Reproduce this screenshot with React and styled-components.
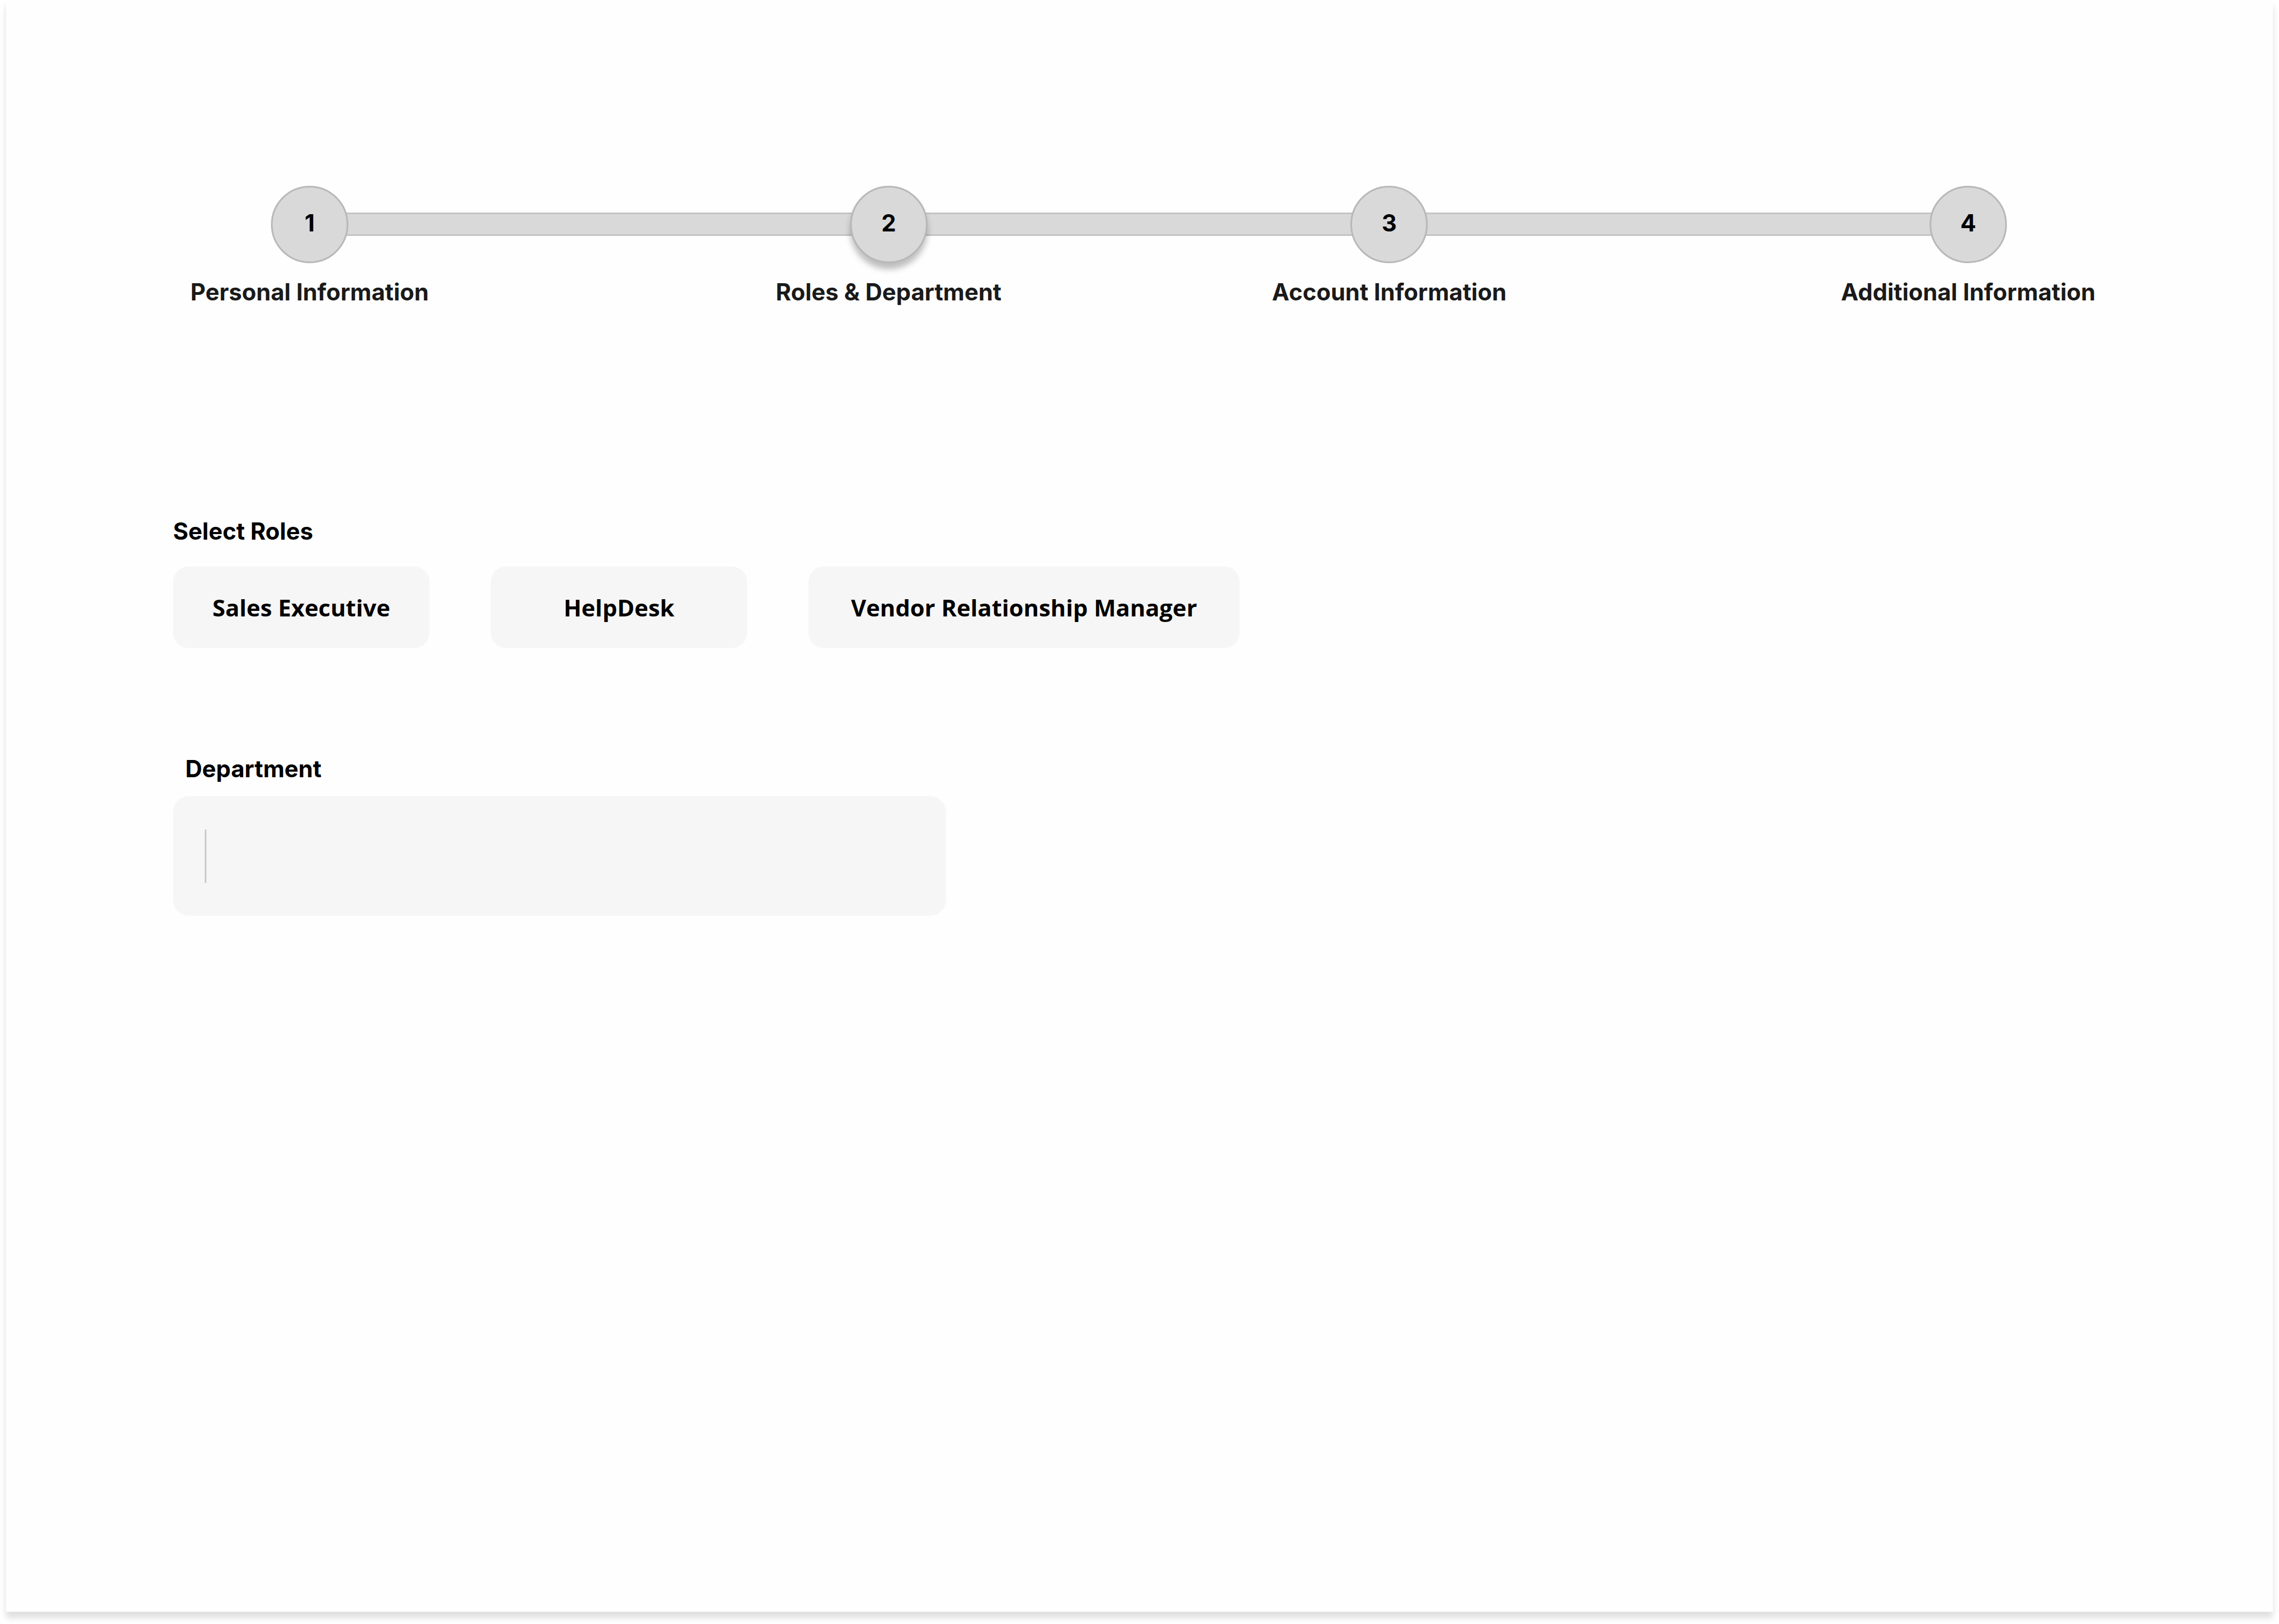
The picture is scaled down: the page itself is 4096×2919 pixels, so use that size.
import React, { useState } from "react";
import styled, { createGlobalStyle } from "styled-components";

const GlobalStyle = createGlobalStyle`
  *, *::before, *::after { box-sizing: border-box; }
  body {
    margin: 0;
    background: #ffffff;
    font-family: Inter, "Liberation Sans", sans-serif;
    font-size: 42px;
    line-height: 52px;
    color: #000000;
  }
`;

const Page = styled.div`
  padding: 0 11px 22px;
`;

const Card = styled.main`
  min-height: calc(100vh - 22px);
  padding: 334px 300px 100px;
  background: #fefefe;
  box-shadow: 0 11px 11px rgba(0, 0, 0, 0.13);
`;

const Stepper = styled.ol`
  display: flex;
  align-items: flex-start;
  margin: 0;
  padding: 0 178px 0 176px;
  list-style: none;
`;

const Step = styled.li`
  flex: none;
  z-index: 1;
  display: flex;
  flex-direction: column;
  align-items: center;
  gap: 26px;
  width: 139px;
`;

const StepCircle = styled.button`
  display: flex;
  align-items: center;
  justify-content: center;
  width: 139px;
  height: 139px;
  padding: 0 0 6px;
  border: 3px solid #b8b8b8;
  border-radius: 50%;
  background: #d9d9d9;
  color: #000000;
  font: inherit;
  font-weight: 700;
  box-shadow: ${(p) => (p.$current ? "0 11px 11px rgba(0, 0, 0, 0.25)" : "none")};
`;

const StepLabel = styled.span`
  font-weight: 700;
  color: #1a1a1a;
  white-space: nowrap;
`;

const Connector = styled.li`
  flex: ${(p) => p.$grow} 1 0;
  height: 42px;
  margin: 48px -12px 0;
  border: 3px solid #c4c4c4;
  border-width: 3px 0;
  background: #d9d9d9;
`;

const Form = styled.form`
  display: flex;
  flex-direction: column;
  gap: 191px;
  margin-top: 378px;
`;

const RoleGroup = styled.section`
  display: flex;
  flex-direction: column;
  gap: 37px;
`;

const SectionTitle = styled.h2`
  margin: 0;
  font-size: 42px;
  font-weight: 700;
`;

const RoleList = styled.div`
  display: flex;
  flex-wrap: wrap;
  gap: 110px;
`;

const RoleButton = styled.button`
  min-width: ${(p) => (p.$wide ? 775 : 461)}px;
  height: 147px;
  padding: 0 56px;
  border: 0;
  border-radius: 28px;
  background: #f6f6f6;
  color: #000000;
  font: 700 42px "Open Sans", "Noto Sans", sans-serif;
`;

const Field = styled.div`
  display: flex;
  flex-direction: column;
  gap: 23px;
  max-width: 1389px;
`;

const FieldLabel = styled.label`
  padding-left: 22px;
  font-weight: 700;
`;

const FieldBox = styled.div`
  display: flex;
  align-items: center;
  height: 215px;
  padding: 0 57px;
  border-radius: 28px;
  background: #f6f6f6;
`;

const TextInput = styled.input`
  flex: 1;
  height: 96px;
  padding: 0 16px;
  border: 0;
  border-left: 3px solid #cbcbcb;
  outline: none;
  background: transparent;
  color: #000000;
  font: inherit;
`;

const steps = [
  { label: "Personal Information", grow: 926 },
  { label: "Roles & Department", grow: 785 },
  { label: "Account Information", grow: 926 },
  { label: "Additional Information" },
];

const roles = [
  { name: "Sales Executive" },
  { name: "HelpDesk" },
  { name: "Vendor Relationship Manager", wide: true },
];

export default function App() {
  const [current, setCurrent] = useState(1);
  const [role, setRole] = useState(null);
  const [department, setDepartment] = useState("");

  return (
    <>
      <GlobalStyle />
      <Page>
        <Card>
          <Stepper>
            {steps.map((step, i) => (
              <React.Fragment key={step.label}>
                <Step aria-current={i === current ? "step" : undefined}>
                  <StepCircle
                    type="button"
                    $current={i === current}
                    onClick={() => setCurrent(i)}
                  >
                    {i + 1}
                  </StepCircle>
                  <StepLabel>{step.label}</StepLabel>
                </Step>
                {step.grow && <Connector $grow={step.grow} aria-hidden="true" />}
              </React.Fragment>
            ))}
          </Stepper>

          <Form onSubmit={(e) => e.preventDefault()}>
            <RoleGroup aria-labelledby="roles-title">
              <SectionTitle id="roles-title">Select Roles</SectionTitle>
              <RoleList>
                {roles.map(({ name, wide }) => (
                  <RoleButton
                    key={name}
                    type="button"
                    $wide={wide}
                    aria-pressed={role === name}
                    onClick={() => setRole(name)}
                  >
                    {name}
                  </RoleButton>
                ))}
              </RoleList>
            </RoleGroup>

            <Field>
              <FieldLabel htmlFor="department">Department</FieldLabel>
              <FieldBox>
                <TextInput
                  id="department"
                  type="text"
                  value={department}
                  onChange={(e) => setDepartment(e.target.value)}
                />
              </FieldBox>
            </Field>
          </Form>
        </Card>
      </Page>
    </>
  );
}
